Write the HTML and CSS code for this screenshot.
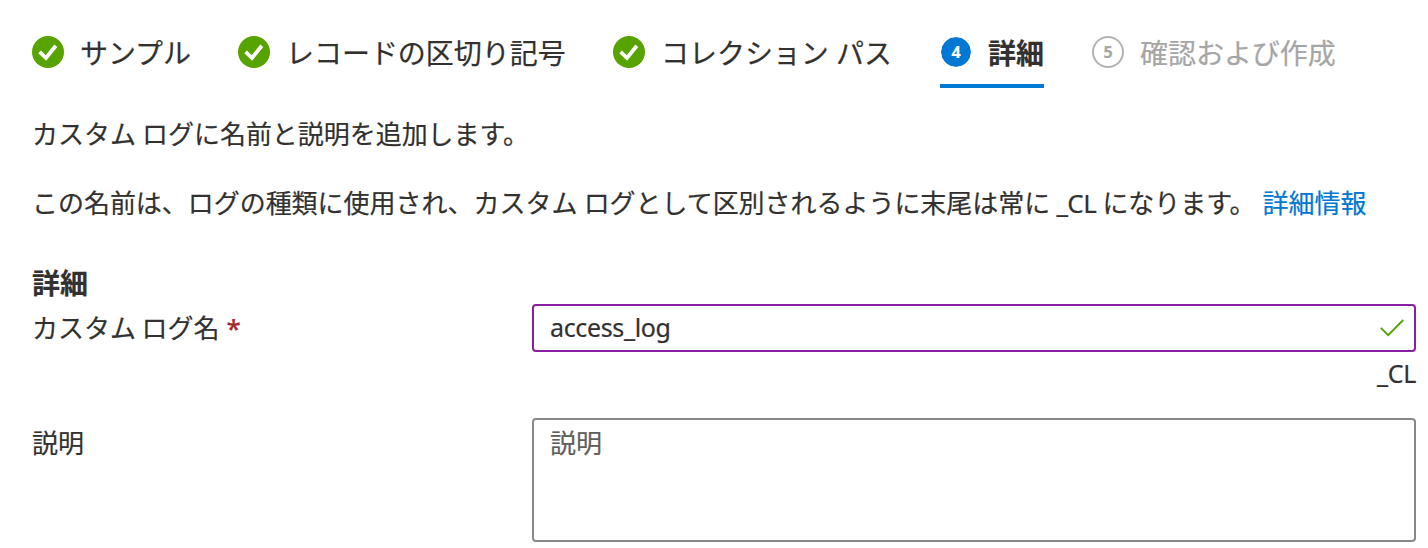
FILE: index.html
```html
<!DOCTYPE html>
<html lang="ja">
<head>
<meta charset="utf-8">
<title>カスタム ログ</title>
<link rel="stylesheet" href="styles.css">
</head>
<body>
<main class="page">
  <nav class="steps">
    <div class="step">
      <svg class="badge" viewBox="0 0 32 32"><circle cx="16" cy="16" r="16" fill="#57a300"/><path d="M7.6 15.8l6.4 6.2L23.8 9.8" fill="none" stroke="#fff" stroke-width="3.8"/></svg>
      <span class="step-label">サンプル</span>
    </div>
    <div class="step">
      <svg class="badge" viewBox="0 0 32 32"><circle cx="16" cy="16" r="16" fill="#57a300"/><path d="M7.6 15.8l6.4 6.2L23.8 9.8" fill="none" stroke="#fff" stroke-width="3.8"/></svg>
      <span class="step-label">レコードの区切り記号</span>
    </div>
    <div class="step">
      <svg class="badge" viewBox="0 0 32 32"><circle cx="16" cy="16" r="16" fill="#57a300"/><path d="M7.6 15.8l6.4 6.2L23.8 9.8" fill="none" stroke="#fff" stroke-width="3.8"/></svg>
      <span class="step-label">コレクション パス</span>
    </div>
    <div class="step step-active">
      <span class="badge number">4</span>
      <span class="step-label">詳細</span>
    </div>
    <div class="step step-pending">
      <span class="badge number">5</span>
      <span class="step-label">確認および作成</span>
    </div>
  </nav>
  <p class="text">カスタム ログに名前と説明を追加します。</p>
  <p class="text note">この名前は、ログの種類に使用され、カスタム ログとして区別されるように末尾は常に <span class="latin">_CL</span> になります。<a class="link">詳細情報</a></p>
  <h2 class="heading">詳細</h2>
  <div class="row">
    <label class="label">カスタム ログ名<span class="required">*</span></label>
    <div class="field">
      <div class="input"><span class="value">access_log</span>
        <svg class="valid" viewBox="0 0 24 18"><path d="M.8 8.8l7.4 7.4L23.2 1" fill="none" stroke="#57a300" stroke-width="1.9"/></svg>
      </div>
      <div class="suffix">_CL</div>
    </div>
  </div>
  <div class="row row-description">
    <label class="label">説明</label>
    <div class="textarea">説明</div>
  </div>
</main>
</body>
</html>
```
FILE: styles.css
```css
* { box-sizing: border-box; }
body {
  margin: 0;
  background: #fff;
  color: #323130;
  font-family: "Noto Sans", "Noto Sans CJK JP", sans-serif;
  font-size: 26px;
  line-height: 36px;
  letter-spacing: -0.04px;
  -webkit-text-stroke: 0.2px currentColor;
}
.page { height: 548px; padding: 20px 12px 0 32px; overflow: hidden; }
.steps {
  display: grid;
  grid-template-columns: 206px 375px 327px 152px 260px;
  height: 68px;
}
.step {
  display: flex;
  align-items: flex-start;
  justify-self: start;
  gap: 16px;
  height: 68px;
  padding-top: 16px;
  white-space: nowrap;
  font-size: 28px;
  line-height: 34px;
}
.badge { flex: none; width: 32px; height: 32px; }
.number {
  display: flex;
  align-items: center;
  justify-content: center;
  border-radius: 50%;
  font-family: "Open Sans", sans-serif;
  font-size: 16px;
  font-weight: 700;
  line-height: 30px;
}
.step-active { border-bottom: 4px solid #0078d4; font-weight: 700; letter-spacing: 0; }
.step-active .number { border: 1px solid #fff; background: #0078d4; background-clip: padding-box; color: #fff; }
.step-pending { color: #a6a6a6; }
.step-pending .number { border: 2px solid #b3b3b3; }
.text { margin: 28px 0 0; white-space: nowrap; word-spacing: -0.5px; }
.note { margin-top: 33px; }
.latin { letter-spacing: -0.6px; }
.link { margin-left: 7px; color: #0078d4; }
.heading { margin: 44px 0 0; font-size: 28px; line-height: 36px; }
.row { display: grid; grid-template-columns: 500px 1fr; }
.row .label { padding-top: 9px; word-spacing: -1px; }
.required { margin-left: 7px; color: #a4262c; font-size: 26px; font-weight: 500; line-height: 24px; }
.field { padding-top: 3px; }
.input {
  display: flex;
  align-items: center;
  justify-content: space-between;
  height: 48px;
  padding: 0 10px 0 16px;
  border: 2px solid #881fa3;
  border-radius: 4px;
}
.value, .suffix { font-family: "Noto Sans", sans-serif; font-size: 25px; letter-spacing: -0.35px; }
.value { line-height: 34px; padding-bottom: 2px; }
.valid { width: 24px; height: 18px; }
.suffix { margin-top: 3px; text-align: right; }
.row-description { margin-top: 27px; }
.row-description .label { padding-top: 7px; }
.textarea {
  height: 124px;
  padding: 5px 16px;
  border: 2px solid #8a8886;
  border-radius: 4px;
  color: #605e5c;
}
```
